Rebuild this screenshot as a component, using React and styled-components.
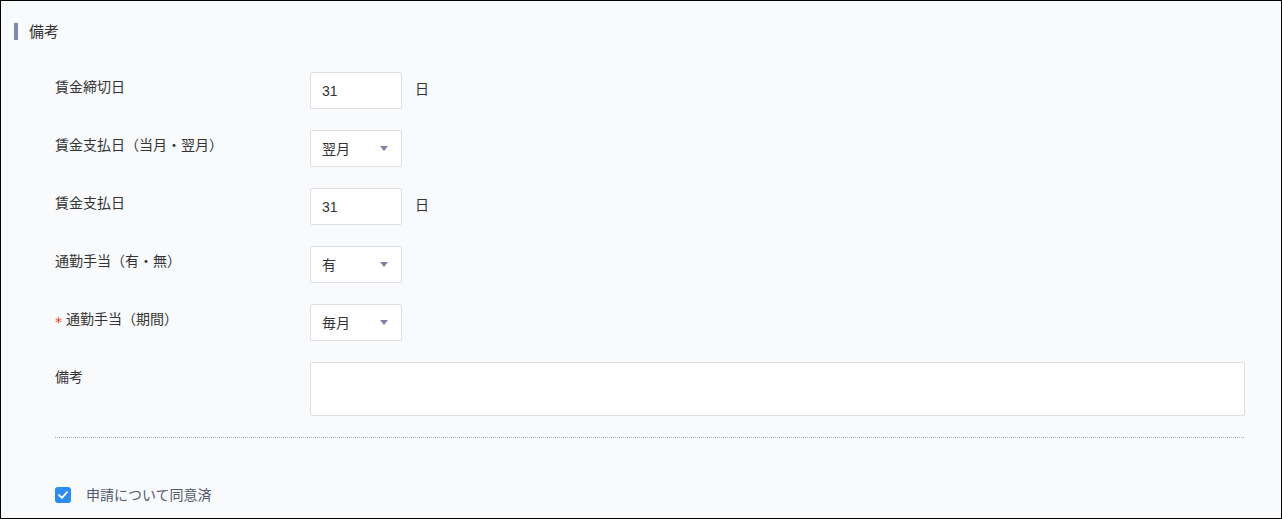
import React from "react";
import styled, { createGlobalStyle } from "styled-components";

const Global = createGlobalStyle`
  html, body { margin: 0; padding: 0; }
  body {
    font-family: "Liberation Sans", "Noto Sans CJK JP", sans-serif;
    background: #ffffff;
  }
  * { box-sizing: border-box; }
`;

const Frame = styled.div`
  width: 1282px;
  height: 519px;
  border: 1px solid #000;
  background: #f9fafc;
  overflow: hidden;
  padding: 22px 0 0 13px;
`;

const Heading = styled.div`
  display: flex;
  align-items: center;
  gap: 11px;
  height: 17px;
  font-size: 15px;
  line-height: 17px;
  color: #333;
  &::before {
    content: "";
    width: 4px;
    height: 17px;
    background: #8288ad;
  }
`;

const Form = styled.div`
  display: flex;
  flex-direction: column;
  gap: 21px;
  padding: 32px 36px 0 41px;
`;

const Row = styled.div`
  display: grid;
  grid-template-columns: 255px 1fr;
  align-items: start;
`;

const Label = styled.div`
  font-size: 14px;
  line-height: 30px;
  color: #333;
  display: flex;
  align-items: center;
`;

const Req = styled.span`
  color: #ed4014;
  font-size: 14px;
  line-height: 14px;
  width: 11px;
  padding-top: 5px;
  font-family: "DejaVu Sans", sans-serif;
`;

const Field = styled.div`
  display: flex;
  align-items: center;
  gap: 13px;
`;

const Box = styled.div`
  width: 92px;
  height: 37px;
  background: #fff;
  border: 1px solid #dcdee2;
  border-radius: 2px;
  padding: 0 11px;
  display: flex;
  align-items: center;
  justify-content: space-between;
  font-size: 14px;
  line-height: 18px;
  color: #333;
`;

const Arrow = styled.span`
  width: 0;
  height: 0;
  border-left: 4px solid transparent;
  border-right: 4px solid transparent;
  border-top: 5px solid #7b80a6;
  margin-right: 2px;
`;

const Unit = styled.span`
  font-size: 14px;
  line-height: 18px;
  color: #333;
  margin-bottom: 3px;
`;

const TextArea = styled.div`
  width: 935px;
  height: 54px;
  background: #fff;
  border: 1px solid #dcdee2;
  border-radius: 2px;
`;

const Divider = styled.div`
  margin: 21px 0 0 41px;
  width: 1189px;
  border-top: 1px dotted #a9adb5;
`;

const Agree = styled.label`
  display: flex;
  align-items: center;
  gap: 15px;
  margin: 49px 0 0 41px;
  font-size: 14px;
  line-height: 16px;
  color: #515a6e;
`;

const Check = styled.span`
  width: 16px;
  height: 16px;
  border-radius: 3px;
  background: #2d8cf0;
  display: flex;
  align-items: center;
  justify-content: center;
`;

const Select = ({ value }) => (
  <Box>
    <span>{value}</span>
    <Arrow />
  </Box>
);

const rows = [
  { label: "賃金締切日", type: "input", value: "31", unit: "日" },
  { label: "賃金支払日（当月・翌月）", type: "select", value: "翌月" },
  { label: "賃金支払日", type: "input", value: "31", unit: "日" },
  { label: "通勤手当（有・無）", type: "select", value: "有" },
  { label: "通勤手当（期間）", type: "select", value: "毎月", required: true },
];

export default function App() {
  return (
    <>
      <Global />
      <Frame>
        <Heading>備考</Heading>
        <Form>
          {rows.map((r) => (
            <Row key={r.label}>
              <Label>
                {r.required && <Req>*</Req>}
                {r.label}
              </Label>
              <Field>
                {r.type === "input" ? (
                  <Box>{r.value}</Box>
                ) : (
                  <Select value={r.value} />
                )}
                {r.unit && <Unit>{r.unit}</Unit>}
              </Field>
            </Row>
          ))}
          <Row>
            <Label>備考</Label>
            <TextArea />
          </Row>
        </Form>
        <Divider />
        <Agree>
          <Check>
            <svg width="10" height="8" viewBox="0 0 10 8">
              <path d="M1 4 L4 6.8 L9 1.2" fill="none" stroke="#fff" strokeWidth="1.8" strokeLinecap="round" strokeLinejoin="round" />
            </svg>
          </Check>
          申請について同意済
        </Agree>
      </Frame>
    </>
  );
}
